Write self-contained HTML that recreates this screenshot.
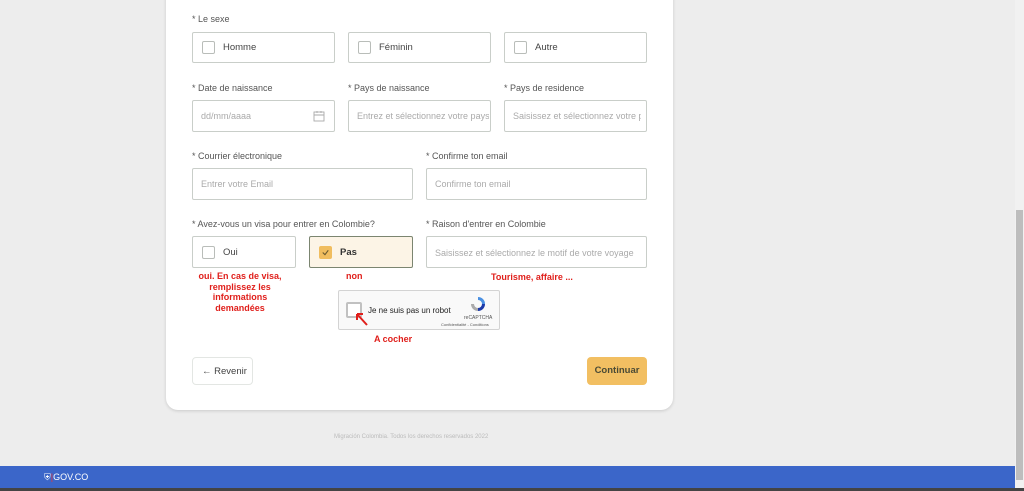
<!DOCTYPE html>
<html><head><meta charset="utf-8"><style>
*{box-sizing:border-box;margin:0;padding:0}
body{width:1024px;height:491px;overflow:hidden;background:#ededed;font-family:"Liberation Sans",sans-serif;position:relative}
.card{position:absolute;left:166px;top:-20px;width:507px;height:430px;background:#fff;border-radius:12px;box-shadow:0 1px 3px rgba(0,0,0,.15)}
.a{position:absolute}
.lbl{position:absolute;font-size:9px;color:#555}
.box{position:absolute;border:1px solid #c9cec9;border-radius:2px;background:#fff;font-size:9.5px}
.chk{position:absolute;left:9px;top:8px;width:13px;height:13px;border:1px solid #b9bdb9;border-radius:2px;background:#fff}
.opt{position:absolute;left:30px;top:9px;color:#444}
.ph{position:absolute;left:8px;top:10px;color:#aaa;white-space:nowrap;overflow:hidden;font-size:9px}
.red{position:absolute;color:#e0201c;font-weight:bold;font-size:9px;text-align:center;line-height:10.5px}
</style></head><body>
<div class="card"></div>
<div class="lbl" style="left:192px;top:14px">* Le sexe</div>
<div class="box" style="left:192px;top:32px;width:143px;height:31px"><div class="chk"></div><div class="opt">Homme</div></div>
<div class="box" style="left:348px;top:32px;width:143px;height:31px"><div class="chk"></div><div class="opt">Féminin</div></div>
<div class="box" style="left:504px;top:32px;width:143px;height:31px"><div class="chk"></div><div class="opt">Autre</div></div>

<div class="lbl" style="left:192px;top:83px">* Date de naissance</div>
<div class="lbl" style="left:348px;top:83px">* Pays de naissance</div>
<div class="lbl" style="left:504px;top:83px">* Pays de residence</div>
<div class="box" style="left:192px;top:100px;width:143px;height:32px"><div class="ph">dd/mm/aaaa</div>
<svg class="a" style="left:120px;top:9px" width="12" height="12" viewBox="0 0 12 12" fill="none" stroke="#aaa" stroke-width="0.9"><rect x="1" y="2" width="10" height="9"/><path d="M1 5h10M4 1v2M8 1v2"/></svg></div>
<div class="box" style="left:348px;top:100px;width:143px;height:32px"><div class="ph" style="width:132px">Entrez et sélectionnez votre pays</div></div>
<div class="box" style="left:504px;top:100px;width:143px;height:32px"><div class="ph" style="width:128px">Saisissez et sélectionnez votre pays</div></div>

<div class="lbl" style="left:192px;top:151px">* Courrier électronique</div>
<div class="lbl" style="left:426px;top:151px">* Confirme ton email</div>
<div class="box" style="left:192px;top:168px;width:221px;height:32px"><div class="ph">Entrer votre Email</div></div>
<div class="box" style="left:426px;top:168px;width:221px;height:32px"><div class="ph">Confirme ton email</div></div>

<div class="lbl" style="left:192px;top:219px">* Avez-vous un visa pour entrer en Colombie?</div>
<div class="lbl" style="left:426px;top:219px">* Raison d'entrer en Colombie</div>
<div class="box" style="left:192px;top:236px;width:104px;height:32px"><div class="chk" style="top:9px"></div><div class="opt" style="top:10px">Oui</div></div>
<div class="box" style="left:309px;top:236px;width:104px;height:32px;background:#fcf4e6;border-color:#7b8570"><div class="chk" style="top:9px;background:#f0bd5f;border-color:#f0bd5f"><svg width="11" height="11" viewBox="0 0 10 10" style="position:absolute;left:0;top:0"><path d="M2.5 5l2 2 3-4" stroke="#6a5a30" stroke-width="1" fill="none"/></svg></div><div class="opt" style="top:10px;font-weight:bold;color:#333">Pas</div></div>
<div class="box" style="left:426px;top:236px;width:221px;height:32px"><div class="ph" style="top:11px">Saisissez et sélectionnez le motif de votre voyage</div></div>

<div class="red" style="left:195px;top:271px;width:90px">oui. En cas de visa,<br>remplissez les<br>informations<br>demandées</div>
<div class="red" style="left:346px;top:271px">non</div>
<div class="red" style="left:491px;top:272px">Tourisme, affaire ...</div>

<div class="box" style="left:338px;top:290px;width:162px;height:40px;background:#f9f9f9;border-color:#d3d3d3"><div style="position:absolute;left:7px;top:11px;width:16px;height:16px;border:2px solid #c1c1c1;border-radius:2px;background:#fff"></div>
<div style="position:absolute;left:29px;top:15px;font-size:8px;color:#222">Je ne suis pas un robot</div>
<svg class="a" style="left:130px;top:4px" width="18" height="18" viewBox="0 0 18 18"><path d="M9 2a7 7 0 0 1 7 7h-3a4 4 0 0 0-4-4z" fill="#4a90e2"/><path d="M16 9a7 7 0 0 1-7 7v-3a4 4 0 0 0 4-4z" fill="#1c3aa9"/><path d="M9 16a7 7 0 0 1-7-7h3a4 4 0 0 0 4 4z" fill="#ababab"/></svg>
<div style="position:absolute;left:125px;top:24px;font-size:5px;color:#555">reCAPTCHA</div>
<div style="position:absolute;left:102px;top:31px;font-size:4px;color:#555">Confidentialité - Conditions</div></div>
<svg class="a" style="left:354px;top:311px" width="16" height="16" viewBox="0 0 16 16"><path d="M13 14L3 3M3 3v6M3 3h6" stroke="#e0201c" stroke-width="2" fill="none"/></svg>
<div class="red" style="left:374px;top:334px">A cocher</div>

<div class="box" style="left:192px;top:357px;width:61px;height:28px;border-color:#e3e6e3;border-radius:4px"><div style="position:absolute;left:9px;top:8px;color:#444;font-size:9.5px">← Revenir</div></div>
<div class="a" style="left:587px;top:357px;width:60px;height:28px;background:#f2bf62;border-radius:4px;font-size:9.5px;font-weight:bold;color:#4a4a35;text-align:center;line-height:28px">Continuar</div>

<div class="a" style="left:334px;top:434px;font-size:6px;color:#bbb">Migración Colombia. Todos los derechos reservados 2022</div>

<div class="a" style="left:0;top:466px;width:1015px;height:22px;background:#3b66c9"></div>
<div class="a" style="left:44px;top:472px;font-size:9px;color:#fff">⛨<span style="color:#e33">|</span>GOV.CO</div>
<div class="a" style="left:0;top:488px;width:1024px;height:3px;background:#444"></div>
<div class="a" style="left:1015px;top:0;width:9px;height:488px;background:#f1f1f1"></div>
<div class="a" style="left:1016px;top:210px;width:7px;height:270px;background:#bdbdbd"></div>
</body></html>
